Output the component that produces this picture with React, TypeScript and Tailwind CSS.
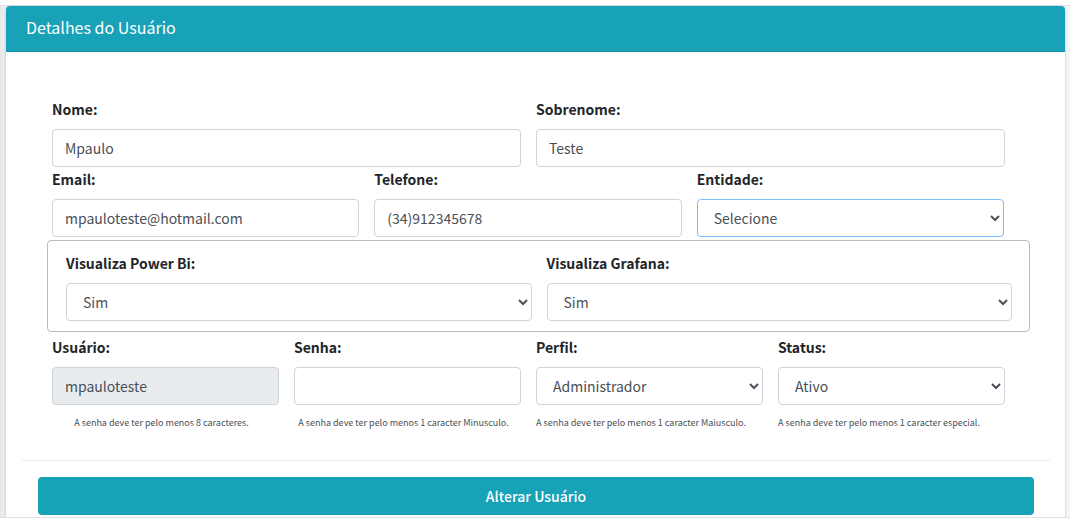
import { useId, type ReactNode } from "react";

const control =
  "block h-[38px] w-full rounded border bg-white px-3 text-sm leading-6 text-[#495057]";

function Label({ id, children }: { id: string; children: ReactNode }) {
  return (
    <label htmlFor={id} className="mb-2 block text-sm leading-6 font-bold text-[#212529]">
      {children}
    </label>
  );
}

type TextFieldProps = {
  label: string;
  value?: string;
  type?: string;
  disabled?: boolean;
};

function TextField({ label, value = "", type = "text", disabled = false }: TextFieldProps) {
  const id = useId();
  return (
    <div className="min-w-0">
      <Label id={id}>{label}</Label>
      <input
        id={id}
        type={type}
        defaultValue={value}
        disabled={disabled}
        className={`${control} border-[#ced4da] disabled:bg-[#e9ecef]`}
      />
    </div>
  );
}

type SelectFieldProps = { label: string; options: string[]; active?: boolean };

function SelectField({ label, options, active = false }: SelectFieldProps) {
  const id = useId();
  return (
    <div className="min-w-0">
      <Label id={id}>{label}</Label>
      <select
        id={id}
        className={`${control} ${active ? "border-[#80bdff]" : "border-[#ced4da]"}`}
      >
        {options.map((option) => (
          <option key={option}>{option}</option>
        ))}
      </select>
    </div>
  );
}

function Hint({ children, center = false }: { children: ReactNode; center?: boolean }) {
  return (
    <p className={`text-[9px] leading-4 whitespace-nowrap text-[#495057] ${center ? "pr-2 text-center" : ""}`}>
      {children}
    </p>
  );
}

export default function App() {
  return (
    <div className="min-h-screen overflow-hidden bg-[#f4f6f9] font-['Noto_Sans_CJK_JP','Noto_Sans',sans-serif]">
      <div className="h-[6px] border-b border-[#dee2e6] bg-white" />
      <div className="bg-linear-to-r from-[#e6e8ec] to-[#f4f6f9] to-[12px] pr-[5px] pl-[6px]">
        <main className="rounded-t bg-white pb-[2px] shadow-[0_0_1px_rgba(0,0,0,0.125),0_1px_3px_rgba(0,0,0,0.2)]">
          <header className="rounded-t border-b border-[#148ea1] bg-[#17a2b8] px-5 pt-[10px] pb-3">
            <h1 className="text-base leading-[23px] text-white">Detalhes do Usuário</h1>
          </header>
          <form onSubmit={(event) => event.preventDefault()} className="pt-[45px]">
            <div className="mr-[60px] ml-[46px] grid grid-cols-2 gap-x-[15px]">
              <TextField label="Nome:" value="Mpaulo" />
              <TextField label="Sobrenome:" value="Teste" />
            </div>
            <div className="mr-[61px] ml-[46px] grid grid-cols-3 gap-x-[15px]">
              <TextField label="Email:" type="email" value="mpauloteste@hotmail.com" />
              <TextField label="Telefone:" type="tel" value="(34)912345678" />
              <SelectField label="Entidade:" options={["Selecione"]} active />
            </div>
            <div className="my-[3px] mr-[35px] ml-[41px] grid grid-cols-2 gap-x-[15px] rounded border border-[#bbbbbb] py-[10px] pr-[17px] pl-[18px]">
              <SelectField label="Visualiza Power Bi:" options={["Sim", "Não"]} />
              <SelectField label="Visualiza Grafana:" options={["Sim", "Não"]} />
            </div>
            <div className="mr-[60px] ml-[46px] grid grid-cols-4 gap-x-[15px]">
              <TextField label="Usuário:" value="mpauloteste" disabled />
              <TextField label="Senha:" type="password" />
              <SelectField label="Perfil:" options={["Administrador", "Usuário"]} />
              <SelectField label="Status:" options={["Ativo", "Inativo"]} />
            </div>
            <div className="mt-[10px] mr-[60px] ml-[46px] grid grid-cols-4 gap-x-[15px]">
              <Hint center>A senha deve ter pelo menos 8 caracteres.</Hint>
              <Hint center>A senha deve ter pelo menos 1 caracter Minusculo.</Hint>
              <Hint>A senha deve ter pelo menos 1 caracter Maiusculo.</Hint>
              <Hint>A senha deve ter pelo menos 1 caracter especial.</Hint>
            </div>
            <hr className="mt-[29px] mr-[15px] mb-4 ml-4 border-[#e9ebed]" />
            <div className="pr-[31px] pl-8">
              <button
                type="submit"
                className="block h-[38px] w-full rounded bg-[#17a2b8] text-sm leading-6 font-medium text-white"
              >
                Alterar Usuário
              </button>
            </div>
          </form>
        </main>
      </div>
      <div className="h-px bg-[#dee2e6]" />
    </div>
  );
}
